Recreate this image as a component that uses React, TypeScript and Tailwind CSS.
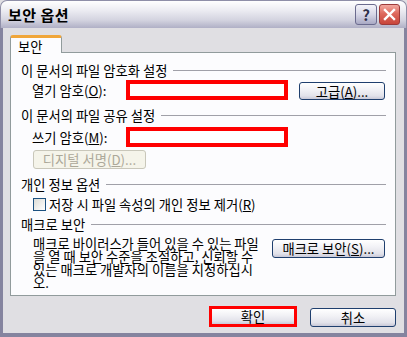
import React from "react";

function U({ children }: { children: React.ReactNode }) {
  return <span className="underline underline-offset-[1px]">{children}</span>;
}

function Header({ text, mt }: { text: string; mt: string }) {
  return (
    <div className={`flex items-center h-[16px] ${mt}`}>
      <span className="whitespace-nowrap">{text}</span>
      <div className="flex-1 h-px bg-[#a0a0a8] ml-[6px]" />
    </div>
  );
}

function XPButton({ children, className }: { children: React.ReactNode; className: string }) {
  return (
    <div
      className={`flex items-center justify-center rounded-[3px] border border-[#1f3f6e] bg-[linear-gradient(#ffffff,#f2f2f6_40%,#e2e2ea_80%,#c9c9d8)] whitespace-nowrap ${className}`}
    >
      {children}
    </div>
  );
}

export default function App() {
  return (
    <div className="w-[407px] h-[337px] flex flex-col font-['Noto_Sans_CJK_KR','Noto_Sans',sans-serif] text-[13.3px] leading-[13px] text-black bg-[#e0dfe3]">
      {/* Title bar */}
      <div className="h-[28px] flex items-center pl-[7px] pr-[6px] rounded-t-[7px] bg-[linear-gradient(#ffffff,#ececf2_35%,#d4d4e0_70%,#b0b0c6)] border-x border-t border-[#8f8fa8]">
        <span className="font-bold text-[15px] leading-[15px] tracking-[0.5px]">보안 옵션</span>
        <div className="ml-auto flex items-center gap-[2px]">
          <div className="w-[22px] h-[21px] rounded-[3px] border border-[#6b6b8e] bg-[linear-gradient(#f4f4fa,#d6d6e6_50%,#a9a9c4)] flex items-center justify-center text-[15px] font-bold text-[#303048]">
            ?
          </div>
          <div className="w-[21px] h-[21px] rounded-[3px] border border-[#9c3a3a] bg-[linear-gradient(#f2a8a0,#de6a5e_45%,#c8453a)] flex items-center justify-center">
            <svg width="13" height="13" viewBox="0 0 13 13">
              <path d="M2 2 L11 11 M11 2 L2 11" stroke="#ffffff" strokeWidth="2.4" strokeLinecap="square" />
            </svg>
          </div>
        </div>
      </div>

      {/* Client area with frame */}
      <div className="flex-1 flex flex-col border-x-[3px] border-b-[4px] border-[#85849f] pl-[7px] pr-[8px] pt-[7px]">
        {/* Tab */}
        <div className="relative z-10 -mb-px w-[52px] h-[18px] rounded-t-[3px] border-t-[3px] border-t-[#f0a63a] border-x border-x-[#919b9c] bg-[#fcfcfe] pl-[7px] pt-[2px]">
          보안
        </div>
        {/* Panel */}
        <div className="h-[244px] border border-[#919b9c] bg-[#fcfcfe] pl-[10px] pr-[9px] flex flex-col">
          <Header text="이 문서의 파일 암호화 설정" mt="mt-[9px]" />
          <div className="flex items-center h-[20px] mt-[2px] pl-[11px]">
            <span className="w-[94px] whitespace-nowrap">
              열기 암호(<U>O</U>):
            </span>
            <div className="w-[162px] h-[20px] border-[4px] border-[#ff0000] bg-white" />
            <XPButton className="ml-[11px] w-[86px] h-[18px] mt-[2px]">
              고급(<U>A</U>)...
            </XPButton>
          </div>

          <Header text="이 문서의 파일 공유 설정" mt="mt-[7px]" />
          <div className="flex items-center h-[20px] mt-[4px] pl-[11px]">
            <span className="w-[94px] whitespace-nowrap">
              쓰기 암호(<U>M</U>):
            </span>
            <div className="w-[162px] h-[20px] border-[4px] border-[#ff0000] bg-white" />
          </div>
          <div className="mt-[3px] ml-[12px] w-[113px] h-[19px] rounded-[3px] border border-[#c9c7ba] bg-[#f5f4ea] text-[#aca899] flex items-center justify-center whitespace-nowrap">
            디지털 서명(<U>D</U>)...
          </div>

          <Header text="개인 정보 옵션" mt="mt-[7px]" />
          <div className="flex items-center h-[16px] mt-[4px] pl-[12px]">
            <div className="w-[13px] h-[13px] border border-[#1c5180] bg-[linear-gradient(135deg,#dcdcd6,#ffffff)]" />
            <span className="ml-[3px] whitespace-nowrap">
              저장 시 파일 속성의 개인 정보 제거(<U>R</U>)
            </span>
          </div>

          <Header text="매크로 보안" mt="mt-[4px]" />
          <div className="flex items-start mt-[5px] pl-[12px]">
            <p className="w-[227px] leading-[13px] whitespace-nowrap">
              매크로 바이러스가 들어 있을 수 있는 파일
              <br />을 열 때 보안 수준을 조절하고, 신뢰할 수
              <br />
              있는 매크로 개발자의 이름을 지정하십시
              <br />
              오.
            </p>
            <XPButton className="ml-[12px] mt-[2px] w-[113px] h-[19px]">
              매크로 보안(<U>S</U>)...
            </XPButton>
          </div>
        </div>

        {/* Bottom buttons */}
        <div className="flex items-start justify-end mt-[10px]">
          <div className="w-[88px] h-[21px] border-[3px] border-[#ff0000] bg-[linear-gradient(#ffffff,#f2f2f6_40%,#e2e2ea_80%,#c9c9d8)] flex items-center justify-center">
            확인
          </div>
          <XPButton className="ml-[13px] mt-[2px] w-[86px] h-[19px]">취소</XPButton>
        </div>
      </div>
    </div>
  );
}
